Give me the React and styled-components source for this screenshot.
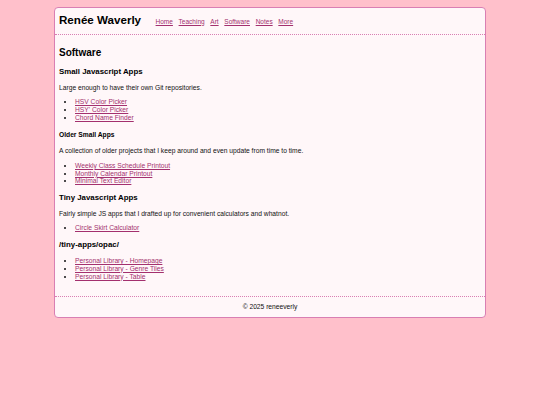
import React from "react";
import styled, { createGlobalStyle } from "styled-components";

const GlobalStyle = createGlobalStyle`
  html, body {
    margin: 0;
    padding: 0;
    background: #ffc0cb;
  }
  body {
    font-family: "Liberation Sans", Arial, sans-serif;
    font-size: 6.7px;
    line-height: 7.8px;
    color: #111;
    padding-top: 7px;
  }
`;

const sections = [
  {
    title: "Small Javascript Apps",
    level: 3,
    text: "Large enough to have their own Git repositories.",
    links: ["HSV Color Picker", "HSY' Color Picker", "Chord Name Finder"],
  },
  {
    title: "Older Small Apps",
    level: 4,
    text: "A collection of older projects that I keep around and even update from time to time.",
    links: ["Weekly Class Schedule Printout", "Monthly Calendar Printout", "Minimal Text Editor"],
  },
  {
    title: "Tiny Javascript Apps",
    level: 3,
    text: "Fairly simple JS apps that I drafted up for convenient calculators and whatnot.",
    links: ["Circle Skirt Calculator"],
  },
  {
    title: "/tiny-apps/opac/",
    level: 3,
    links: [
      "Personal Library - Homepage",
      "Personal Library - Genre Tiles",
      "Personal Library - Table",
    ],
  },
];

const navItems = ["Home", "Teaching", "Art", "Software", "Notes", "More"];

const App = () => {
  return (
    <>
      <GlobalStyle />
      <Page>
        <Header>
          <SiteTitle>Renée Waverly</SiteTitle>
          <Nav>
            {navItems.map((item) => (
              <NavLink href="#" key={item}>
                {item}
              </NavLink>
            ))}
          </Nav>
        </Header>

        <Main>
          <PageTitle>Software</PageTitle>
          {sections.map((section) => (
            <React.Fragment key={section.title}>
              {section.level === 3 ? (
                <SectionTitle>{section.title}</SectionTitle>
              ) : (
                <SubTitle>{section.title}</SubTitle>
              )}
              {section.text && <Text>{section.text}</Text>}
              <List>
                {section.links.map((link) => (
                  <li key={link}>
                    <Link href="#">{link}</Link>
                  </li>
                ))}
              </List>
            </React.Fragment>
          ))}
        </Main>

        <Footer>© 2025 reneeverly</Footer>
      </Page>
    </>
  );
};

const Page = styled.div`
  width: 80%;
  margin: 0 auto;
  background: #fff7f9;
  border: 1px solid #d97fb3;
  border-radius: 4px;
  box-sizing: border-box;
`;

const Header = styled.header`
  display: flex;
  align-items: baseline;
  gap: 14.5px;
  padding: 4.5px 4px 8.3px;
  border-bottom: 1px dotted #d97fb3;
`;

const SiteTitle = styled.h1`
  margin: 0;
  font-size: 11.6px;
  line-height: 13.3px;
  font-weight: bold;
  color: #000;
`;

const Nav = styled.nav`
  display: flex;
  gap: 5.7px;
  font-size: 6.5px;
`;

const NavLink = styled.a`
  color: #a3306e;
  text-decoration: underline;
`;

const Main = styled.main`
  padding: 3.8px 4px 9px;
  display: flow-root;
`;

const PageTitle = styled.h2`
  font-size: 10px;
  line-height: 11.5px;
  margin: 0.83em 0;
  color: #000;
`;

const SectionTitle = styled.h3`
  font-size: 7.86px;
  line-height: 9px;
  margin: 1em 0;
  color: #000;
`;

const SubTitle = styled.h4`
  font-size: 6.7px;
  line-height: 7.8px;
  margin: 1.33em 0;
  color: #000;
`;

const Text = styled.p`
  margin: 1em 0;
`;

const List = styled.ul`
  margin: 1em 0;
  padding-left: 16px;
`;

const Link = styled.a`
  color: #a3306e;
  text-decoration: underline;
`;

const Footer = styled.footer`
  border-top: 1px dotted #d97fb3;
  padding: 5.5px 4px 6.5px;
  text-align: center;
`;

export default App;
